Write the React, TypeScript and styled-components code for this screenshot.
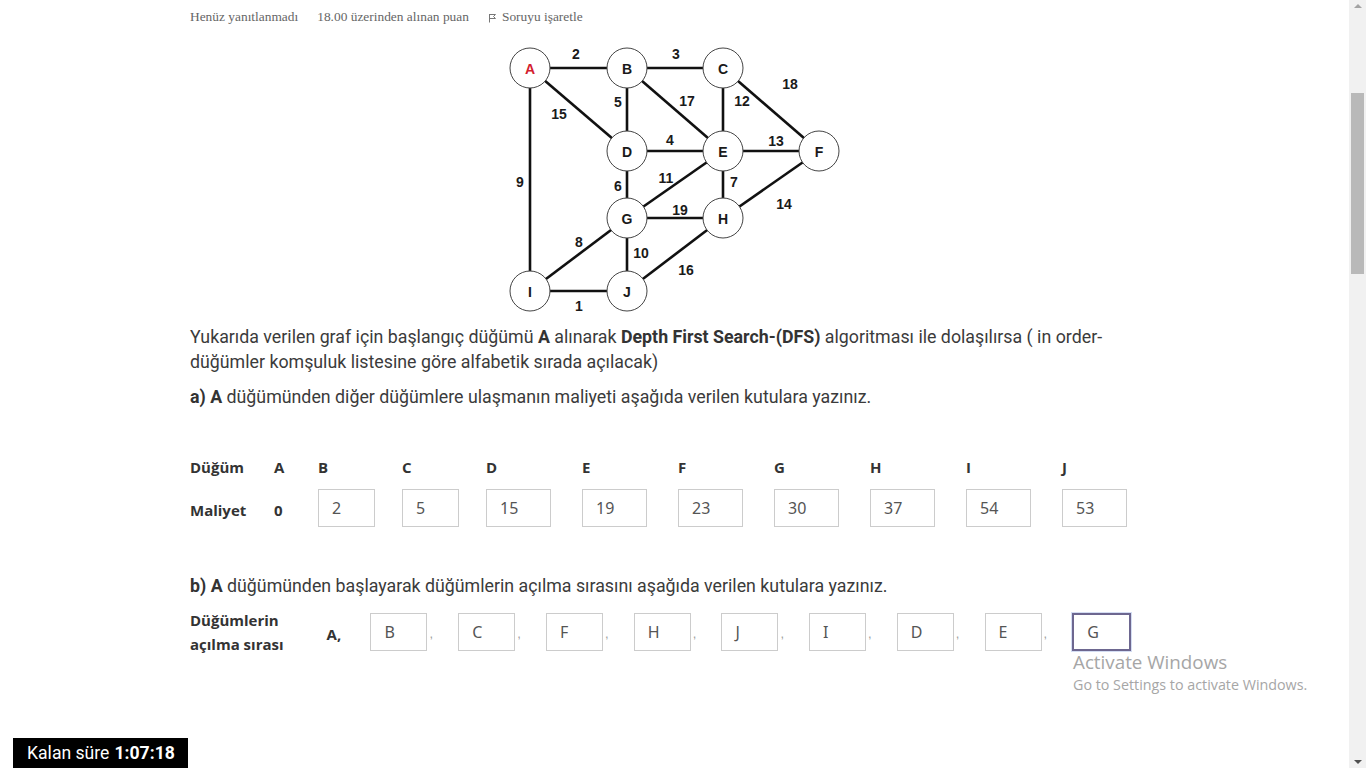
import React from "react";
import styled, { createGlobalStyle } from "styled-components";

const Global = createGlobalStyle`
  html, body { margin: 0; padding: 0; background: #fff; overflow: hidden; }
  body { font-family: Roboto, "Noto Sans", sans-serif; }
  * { box-sizing: border-box; }
`;

const Page = styled.div`
  display: flex;
  width: 1366px;
  height: 768px;
  overflow: hidden;
  position: relative;
`;

const Main = styled.main`
  flex: 1;
  padding: 7px 0 0 190px;
`;

const Column = styled.div`
  width: 970px;
  display: flex;
  flex-direction: column;
`;

const InfoBar = styled.div`
  display: flex;
  align-items: center;
  gap: 19px;
  height: 20px;
  font-family: "Liberation Serif", "DejaVu Serif", serif;
  font-size: 13.4px;
  color: #666;
`;

const InfoItem = styled.span`
  display: inline-flex;
  align-items: center;
  gap: 5px;
`;

const GraphWrap = styled.div`
  display: flex;
  justify-content: center;
  margin-top: 13px;
`;

const Para = styled.p<{ $mt?: number }>`
  margin: ${(p) => p.$mt ?? 0}px 0 0;
  font-size: 17.8px;
  line-height: 25px;
  color: #3b3b3b;
  width: 935px;
  b { font-weight: 700; color: #333; }
`;

const CostGrid = styled.div`
  display: grid;
  grid-template-columns: 84px 44px 84px 84px 96px 96px 96px 96px 96px 96px 96px;
  row-gap: 12px;
  margin-top: 48px;
  align-items: center;
`;

const HeadCell = styled.div<{ $low?: boolean }>`
  font-family: "Open Sans", "Noto Sans", sans-serif;
  font-weight: 700;
  font-size: 15px;
  line-height: 20px;
  color: #333;
  padding-top: ${(p) => (p.$low ? 4 : 0)}px;
`;

const Box = styled.div<{ $w: number; $focus?: boolean }>`
  width: ${(p) => p.$w}px;
  height: 38px;
  border: ${(p) => (p.$focus ? "2px solid #6d6790" : "1px solid #ccc")};
  box-shadow: ${(p) => (p.$focus ? "0 0 0 1px #d4ddf3" : "none")};
  display: flex;
  align-items: center;
  padding-left: 13px;
  font-family: "Noto Sans", "Open Sans", sans-serif;
  font-size: 16px;
  color: #555;
`;

const OrderRow = styled.div`
  display: flex;
  align-items: center;
  margin-top: 10px;
`;

const OrderLabel = styled.div`
  width: 137px;
  font-family: "Open Sans", "Noto Sans", sans-serif;
  font-weight: 700;
  font-size: 15px;
  line-height: 24px;
  color: #333;
`;

const StartNode = styled.div`
  width: 44px;
  font-family: "Open Sans", "Noto Sans", sans-serif;
  font-weight: 700;
  font-size: 15px;
  color: #333;
  padding-top: 4px;
`;

const Slot = styled.div`
  width: 88px;
  display: flex;
  align-items: center;
`;

const Comma = styled.span`
  margin-left: 2px;
  margin-top: 2px;
  font-family: "Liberation Sans", sans-serif;
  font-size: 13px;
  color: #a0a0a0;
`;

const ScrollBar = styled.aside`
  width: 17px;
  height: 768px;
  background: #f1f1f1;
  display: flex;
  flex-direction: column;
  align-items: center;
  justify-content: space-between;
  padding: 4px 0;
`;

const ScrollTrack = styled.div`
  flex: 1;
  width: 100%;
  display: flex;
  justify-content: center;
  padding-top: 85px;
`;

const Thumb = styled.div`
  width: 13px;
  height: 181px;
  background: #b9b9b9;
`;

const Arrow = styled.div<{ $down?: boolean }>`
  width: 0;
  height: 0;
  border-left: 4px solid transparent;
  border-right: 4px solid transparent;
  ${(p) => (p.$down ? "border-top: 4px solid #505050;" : "border-bottom: 4px solid #a3a3a3;")}
`;

const Timer = styled.div`
  position: absolute;
  left: 13px;
  bottom: 0;
  width: 175px;
  height: 30px;
  background: #000;
  color: #fff;
  font-family: Roboto, "Noto Sans", sans-serif;
  font-size: 17.6px;
  display: flex;
  align-items: center;
  padding-left: 14px;
  b { font-weight: 700; margin-left: 5px; }
`;

const Watermark = styled.div`
  position: absolute;
  left: 1073px;
  top: 650px;
  color: #a6a6a6;
  font-family: "Open Sans", "Noto Sans", sans-serif;
  font-weight: 400;
`;

const WmTitle = styled.div`
  font-size: 18.8px;
  line-height: 24px;
`;

const WmSub = styled.div`
  font-size: 14.3px;
  line-height: 22px;
`;

type P = [number, number];
const nodes: Record<string, P> = {
  A: [25, 28], B: [122, 28], C: [218, 28], D: [122, 111], E: [218, 111],
  F: [314, 111], G: [122, 178], H: [218, 178], I: [25, 251], J: [122, 251],
};
const edges: [string, string][] = [
  ["A", "B"], ["B", "C"], ["C", "F"], ["A", "D"], ["B", "D"], ["B", "E"], ["C", "E"],
  ["D", "E"], ["E", "F"], ["A", "I"], ["D", "G"], ["G", "E"], ["E", "H"], ["G", "H"],
  ["F", "H"], ["I", "G"], ["G", "J"], ["J", "H"], ["I", "J"],
];
const weights: [string, number, number][] = [
  ["2", 71, 14], ["3", 171, 14], ["18", 285, 44], ["5", 113, 62], ["17", 182, 61],
  ["12", 237, 61], ["15", 54, 74], ["4", 165, 100], ["13", 271, 101], ["9", 15, 142],
  ["6", 113, 146], ["11", 161, 138], ["7", 229, 142], ["19", 175, 170], ["14", 279, 164],
  ["8", 74, 202], ["10", 136, 213], ["16", 181, 230], ["1", 74, 266],
];

const Graph = () => (
  <svg width="340" height="280" viewBox="0 0 340 280">
    {edges.map(([a, b]) => (
      <line key={a + b} x1={nodes[a][0]} y1={nodes[a][1]} x2={nodes[b][0]} y2={nodes[b][1]}
        stroke="#111" strokeWidth="2.6" />
    ))}
    {Object.entries(nodes).map(([k, [x, y]]) => (
      <g key={k}>
        <circle cx={x} cy={y} r="20" fill="#fff" stroke="#444" strokeWidth="1" />
        <text x={x} y={y + 1} textAnchor="middle" dominantBaseline="central"
          fontFamily="'Liberation Sans', Arial, sans-serif" fontWeight="700" fontSize="14"
          fill={k === "A" ? "#d3202f" : "#1a1a1a"}>{k}</text>
      </g>
    ))}
    {weights.map(([t, x, y]) => (
      <text key={t} x={x} y={y} textAnchor="middle" dominantBaseline="central"
        fontFamily="'Liberation Sans', Arial, sans-serif" fontWeight="700" fontSize="14"
        fill="#1a1a1a">{t}</text>
    ))}
  </svg>
);

const Flag = () => (
  <svg width="9" height="11" viewBox="0 0 9 11">
    <path d="M1.5 2 L1.5 10.5 M1.5 2.5 L7.5 2.5 L5.5 4.5 L7.5 6.5 L1.5 6.5" fill="none" stroke="#777" strokeWidth="1" />
  </svg>
);

const letters = ["B", "C", "D", "E", "F", "G", "H", "I", "J"];
const costs = ["2", "5", "15", "19", "23", "30", "37", "54", "53"];
const order = ["B", "C", "F", "H", "J", "I", "D", "E", "G"];

export default function App() {
  return (
    <>
      <Global />
      <Page>
        <Main>
          <Column>
            <InfoBar>
              <InfoItem>Henüz yanıtlanmadı</InfoItem>
              <InfoItem>18.00 üzerinden alınan puan</InfoItem>
              <InfoItem><Flag />Soruyu işaretle</InfoItem>
            </InfoBar>
            <GraphWrap><Graph /></GraphWrap>
            <Para $mt={4}>
              Yukarıda verilen graf için başlangıç düğümü <b>A</b> alınarak <b>Depth First Search-(DFS)</b> algoritması ile dolaşılırsa ( in order-düğümler komşuluk listesine göre alfabetik sırada açılacak)
            </Para>
            <Para $mt={10}>
              <b>a) A</b> düğümünden diğer düğümlere ulaşmanın maliyeti aşağıda verilen kutulara yazınız.
            </Para>
            <CostGrid>
              <HeadCell>Düğüm</HeadCell>
              <HeadCell>A</HeadCell>
              {letters.map((l) => <HeadCell key={l}>{l}</HeadCell>)}
              <HeadCell $low>Maliyet</HeadCell>
              <HeadCell $low>0</HeadCell>
              {costs.map((c, i) => <Box key={i} $w={i < 2 ? 57 : 65}>{c}</Box>)}
            </CostGrid>
            <Para $mt={46}>
              <b>b) A</b> düğümünden başlayarak düğümlerin açılma sırasını aşağıda verilen kutulara yazınız.
            </Para>
            <OrderRow>
              <OrderLabel>Düğümlerin<br />açılma sırası</OrderLabel>
              <StartNode>A,</StartNode>
              {order.map((o, i) => (
                <Slot key={i}>
                  <Box $w={i === 8 ? 59 : 57} $focus={i === 8}>{o}</Box>
                  {i < 8 && <Comma>,</Comma>}
                </Slot>
              ))}
            </OrderRow>
          </Column>
        </Main>
        <ScrollBar>
          <Arrow />
          <ScrollTrack><Thumb /></ScrollTrack>
          <Arrow $down />
        </ScrollBar>
        <Watermark>
          <WmTitle>Activate Windows</WmTitle>
          <WmSub>Go to Settings to activate Windows.</WmSub>
        </Watermark>
        <Timer>Kalan süre<b>1:07:18</b></Timer>
      </Page>
    </>
  );
}
